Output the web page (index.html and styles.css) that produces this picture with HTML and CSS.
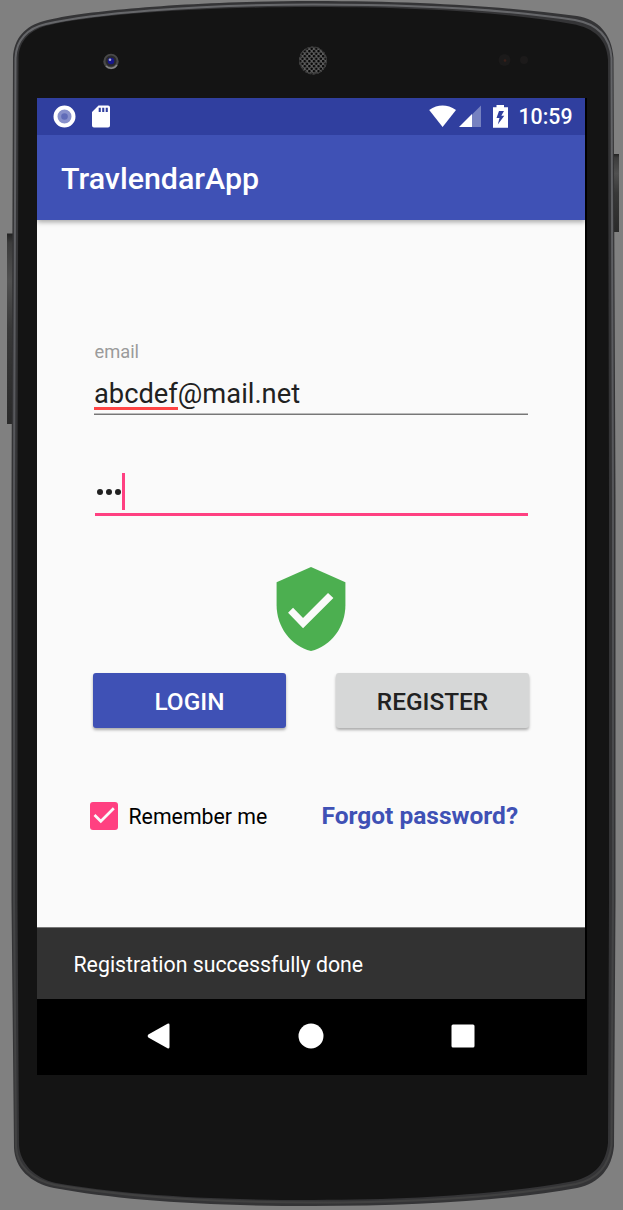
FILE: index.html
```
<!DOCTYPE html>
<html lang="en">
<head>
<meta charset="utf-8">
<title>TravlendarApp</title>
<link rel="stylesheet" href="styles.css">
</head>
<body>
<div class="stage">
  <svg class="device" viewBox="0 0 623 1210" aria-hidden="true">
    <defs>
      <linearGradient id="key" x1="0" y1="0" x2="0" y2="1">
        <stop offset="0" stop-color="#222"/><stop offset=".05" stop-color="#3c3c3c"/><stop offset=".25" stop-color="#505050"/><stop offset=".5" stop-color="#383838"/><stop offset="1" stop-color="#2a2a2a"/>
      </linearGradient>
      <linearGradient id="rim" x1="0" y1="0" x2="0" y2="1">
        <stop offset="0" stop-color="#66676a"/><stop offset=".3" stop-color="#5a5b5f"/><stop offset=".7" stop-color="#444547"/><stop offset="1" stop-color="#414141"/>
      </linearGradient>
      <pattern id="mesh" width="4.600" height="5" patternUnits="userSpaceOnUse">
        <rect width="5" height="5" fill="#5c5c5c"/><circle cx="1.200" cy="1.200" r="1.300" fill="#080808"/><circle cx="3.500" cy="3.700" r="1.300" fill="#080808"/>
      </pattern>
    </defs>
    <rect x="7" y="233.500" width="6" height="190.500" fill="url(#key)"/>
    <rect x="613" y="154" width="6" height="78" fill="url(#key)"/>
    <path fill="#343436" d="M13 58C14 38 25 26 44 21C80 11 190 1 313 1C425 1 510 7 577 16C598 19 612 34 613.500 58L615.500 500V900L614 1146C612 1168 600 1183 577 1188C510 1200 420 1206 313 1206C200 1206 120 1200 54 1188C30 1183 15 1168 14 1148L11.500 900V500Z"/>
    <path fill="none" stroke="url(#rim)" stroke-width="2" d="M15.500 58C16 40 28 28 46 24C90 14 190 4.500 313 4.500C425 4.500 510 10 575 20C597 24 610 36 611.500 58L613 500V900L611.500 1145C609 1166 598 1179 576 1184C510 1196 420 1202.500 313 1202.500C200 1202.500 120 1196 55 1185C32 1180 17 1166 16 1147L14 900V500Z"/>
    <path fill="#141414" d="M18.500 58C19 41 30 29 50 25C95 15 190 7 313 7C425 7 510 13 572 24C595 28 607 40 608 60L609 500V900L608 1143C606 1163 595 1176 574 1181C510 1193 420 1200 313 1200C200 1200 120 1194 56 1183C34 1178 20 1163 19 1145L17.500 900V500Z"/>
    <circle cx="111" cy="61.500" r="7.700" fill="#484848"/><path d="M106 66A7 7 0 0 0 117 65" fill="none" stroke="#858585" stroke-width="1.500"/><circle cx="111" cy="61" r="5.500" fill="#29292c"/><circle cx="111" cy="61" r="3.300" fill="#17178b"/><circle cx="110" cy="59.800" r="1.300" fill="#a8a9c4"/>
    <circle cx="313" cy="60.500" r="14" fill="url(#mesh)"/><circle cx="313" cy="60.500" r="13.500" fill="none" stroke="#383838"/>
    <circle cx="504.500" cy="60" r="6" fill="#1b1a1a"/><circle cx="505" cy="60.500" r="1.300" fill="#3b201a"/><circle cx="524" cy="60" r="4" fill="#1c1a1a"/>
  </svg>
  <main class="screen">
    <header class="status">
      <svg class="st-left" viewBox="0 0 60 24"><circle cx="11.500" cy="12.500" r="9" fill="#8790cb" stroke="#fff" stroke-width="4"/><circle cx="11.500" cy="12.500" r="3.300" fill="#606cb8"/><path fill="#fff" fill-rule="evenodd" d="M45.500 1.500H55Q57 1.500 57 3.500V21.500Q57 23.500 55 23.500H41Q39 23.500 39 21.500V8ZM45.700 3.800V8H47.800V3.800ZM49.200 3.800V8H51.300V3.800ZM52.700 3.800V8H54.800V3.800Z"/></svg>
      <svg class="st-right" viewBox="0 0 80 24"><path fill="#fff" d="M.2 6Q13.500-2.800 27 6L13.600 23Z"/><path fill="#7681c0" d="M43 10.500L52 1.500V23H43Z"/><path fill="#fff" d="M30 23L43 10V23Z"/><path fill="#fff" fill-rule="evenodd" d="M64 3.200H67.500V1H75V3.200H79V23.800H64ZM70 7L67.500 14H70.500L68.800 20.500L75.300 11.800H72.300L75 7Z"/></svg>
      <time class="clock">10:59</time>
    </header>
    <div class="appbar"><h1 class="title">TravlendarApp</h1></div>
    <form class="content">
      <div class="field">
        <div class="label">email</div>
        <div class="value"><span class="typo">abcdef</span>@mail.net</div>
      </div>
      <div class="password"><i class="dot"></i><i class="dot"></i><i class="dot"></i><i class="caret"></i></div>
      <svg class="shield" viewBox="2 1 20 22" preserveAspectRatio="none"><path fill="#4caf50" d="M12 1L2.700 5V11C2.700 16.550 6.500 21.740 12 23C17.500 21.740 21.300 16.550 21.300 11V5Z"/><path fill="#fafafa" d="M5.800 13L7.150 11.700L9.850 14.350L16.600 7.800L18.050 9.100L9.850 17.050Z"/></svg>
      <div class="buttons"><button type="button" class="btn login">LOGIN</button><button type="button" class="btn register">REGISTER</button></div>
      <div class="options">
        <svg class="check" viewBox="0 0 28 28"><rect width="28" height="28" rx="3" fill="#ff4081"/><path d="M4.500 13L10.800 19.300L23.800 6.200" fill="none" stroke="#fafafa" stroke-width="2.700"/></svg>
        <span class="remember">Remember me</span><a class="forgot">Forgot password?</a>
      </div>
    </form>
    <div class="snackbar"><span class="snacktext">Registration successfully done</span></div>
    <nav class="nav">
      <svg viewBox="0 0 26 26"><path fill="#fff" d="M2.300 11.600Q.8 13 2.300 14.400L21.500 25.200Q23.500 26 23.500 24V2Q23.500 0 21.500.8Z"/></svg>
      <svg viewBox="0 0 26 26"><circle cx="13" cy="13" r="12.500" fill="#fff"/></svg>
      <svg viewBox="0 0 26 26"><rect x="1.500" y="1.500" width="23" height="23" rx="1.500" fill="#fff"/></svg>
    </nav>
  </main>
</div>
</body>
</html>
```
FILE: styles.css
```
* { box-sizing: border-box; }
body { margin: 0; background: #808080; font-family: Roboto, sans-serif; }
.stage { position: relative; width: 623px; height: 1210px; padding: 98px 0 0 37px; overflow: hidden; }
.device { position: absolute; inset: 0; width: 623px; height: 1210px; }
.screen { position: relative; display: flex; flex-direction: column; width: 550px; height: 977px; background: #000; }
.status { display: flex; align-items: center; width: 548px; height: 37px; padding: 0 0 1px 16px; background: #303f9f; color: #fff; }
.st-left { width: 60px; height: 24px; }
.st-right { width: 80px; height: 24px; margin-left: 316px; }
.clock { margin-left: 9.5px; padding-top: 1px; font-size: 21.3px; font-weight: 500; line-height: 24px; white-space: nowrap; }
.appbar { position: relative; z-index: 1; display: flex; align-items: center; width: 548px; height: 85px; padding: 2px 0 0 24px; background: #3f51b5; box-shadow: 0 2px 5px rgba(0, 0, 0, .35); clip-path: inset(0 0 -12px 0); }
.title { margin: 0; color: #fff; font-size: 30.4px; font-weight: 500; }
.content { display: flex; flex-direction: column; width: 548px; height: 707px; padding: 121px 54px 0 53px; background: #fafafa; }
.field { width: 434px; height: 74px; margin-left: 4px; border-bottom: 1px solid #777; box-shadow: 0 -1px #bbb inset; }
.label { height: 22px; padding-left: 0.5px; color: #9b9b9b; font-size: 18.3px; line-height: 22px; }
.value { margin-top: 15px; color: #212121; font-size: 27.3px; line-height: 32px; height: 35px; }
.typo { display: inline-block; height: 32px; border-bottom: 3px solid #ff4444; }
.password { display: flex; align-items: center; width: 433px; height: 43px; margin: 58px 0 0 5px; padding: 0 0 3px 2px; border-bottom: 3px solid #ff4081; }
.dot { width: 6px; height: 6px; margin: 1px 3.2px 0 0; border-radius: 50%; background: #212121; }
.dot:nth-child(3) { margin-right: 0; }
.caret { width: 3px; height: 37px; margin-left: 0.6px; background: #ff4081; }
.shield { align-self: center; width: 74px; height: 84px; margin-top: 51px; }
.buttons { display: flex; gap: 50px; margin-top: 22px; padding-left: 3px; }
.btn { width: 193px; height: 55px; padding: 2px 0 0; border: 0; border-radius: 3px; box-shadow: 0 2px 3px rgba(0, 0, 0, .32); font-family: Roboto, sans-serif; font-size: 24.4px; font-weight: 500; }
.login { background: #3f51b5; color: #fff; }
.register { background: #d6d7d7; color: #212121; }
.options { display: flex; align-items: center; height: 32px; margin-top: 72px; white-space: nowrap; }
.check { flex: none; width: 28px; height: 28px; }
.remember { width: 193px; margin-left: 10.5px; padding-top: 1px; color: #000; font-size: 21.3px; }
.forgot { padding-bottom: 1px; color: #3f51b5; font-size: 24.5px; font-weight: 700; }
.snackbar { display: flex; align-items: center; width: 548px; height: 72px; padding: 1px 0 0 36.5px; border-top: 1px solid #777; background: #323232; color: #fff; font-size: 21.3px; }
.nav { display: flex; justify-content: center; gap: 126px; height: 76px; padding: 24px 2px 0 0; }
.nav svg { width: 26px; height: 26px; }
```
